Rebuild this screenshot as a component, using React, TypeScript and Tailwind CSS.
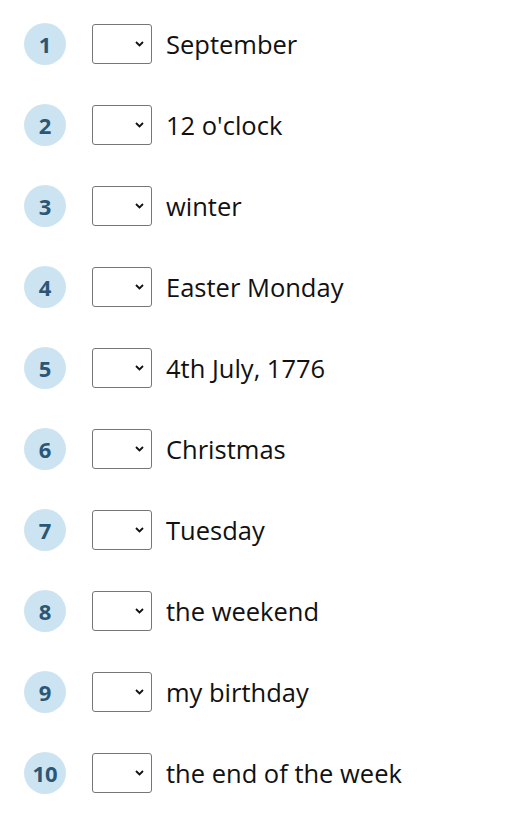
import React from "react";

const items = [
  "September",
  "12 o'clock",
  "winter",
  "Easter Monday",
  "4th July, 1776",
  "Christmas",
  "Tuesday",
  "the weekend",
  "my birthday",
  "the end of the week",
];

export default function App() {
  return (
    <div
      className="bg-white w-[532px] min-h-[815px] pt-[3px] pl-[24px]"
      style={{ fontFamily: '"Open Sans", "Noto Sans", sans-serif' }}
    >
      {items.map((t, i) => (
        <div key={i} className="flex items-center h-[81px]">
          <div className="w-[42px] h-[42px] rounded-full bg-[#cce4f1] flex items-center justify-center text-[#2b5675] font-bold text-[22px] leading-none">
            {i + 1}
          </div>
          <div className="relative ml-[26px] w-[60px] h-[40px]">
            <select className="appearance-none w-full h-full border border-[#767676] rounded-[3px] bg-white outline-none" defaultValue="">
              <option value=""></option>
              <option value="in">in</option>
              <option value="on">on</option>
              <option value="at">at</option>
            </select>
            <svg
              className="absolute right-[8px] top-1/2 -translate-y-1/2 pointer-events-none"
              width="9"
              height="6"
              viewBox="0 0 9 6"
            >
              <path d="M1 1 L4.5 4.5 L8 1" fill="none" stroke="#111" strokeWidth="1.8" />
            </svg>
          </div>
          <div className="ml-[14px] text-[25.5px] text-[#111] leading-none pt-[2px]">{t}</div>
        </div>
      ))}
    </div>
  );
}
